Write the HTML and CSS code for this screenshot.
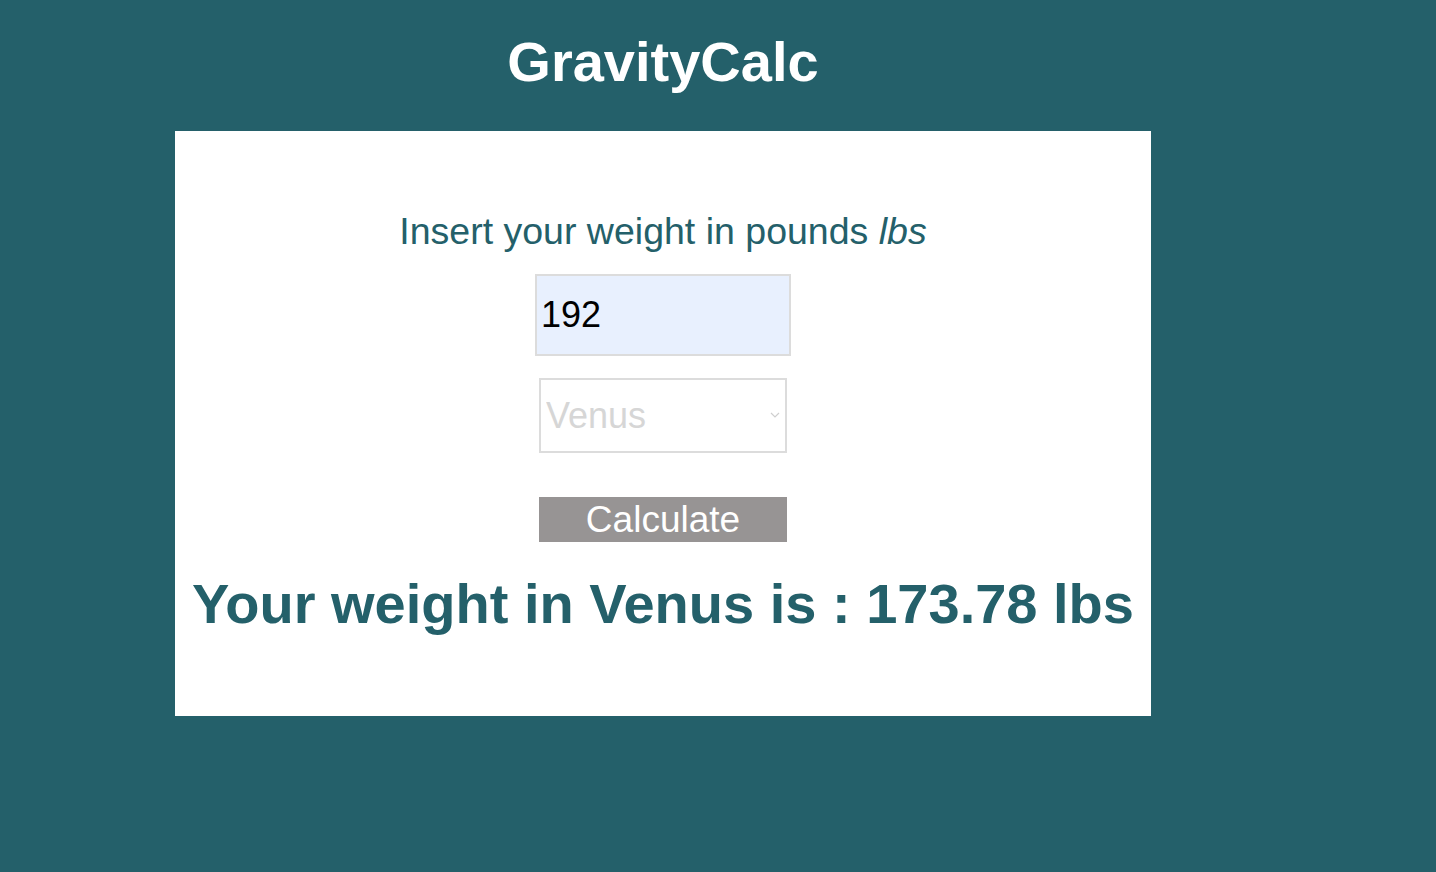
FILE: index.html
```html
<!DOCTYPE html>
<html lang="en">
<head>
<meta charset="utf-8">
<title>GravityCalc</title>
<link rel="stylesheet" href="styles.css">
</head>
<body>
<div class="wrap">
  <h1 class="title">GravityCalc</h1>
  <main class="card">
    <p class="prompt">Insert your weight in pounds <em>lbs</em></p>
    <input class="weight" type="text" value="192">
    <div class="select-box">
      <select class="planet">
        <option>Venus</option>
        <option>Mercury</option>
        <option>Mars</option>
        <option>Jupiter</option>
      </select>
      <svg class="chev" width="10" height="6" viewBox="0 0 10 6"><path d="M1 1 L5 5 L9 1" fill="none" stroke="#cfcfcf" stroke-width="1.2"/></svg>
    </div>
    <button class="calc" type="button">Calculate</button>
    <h2 class="result">Your weight in Venus is : 173.78 lbs</h2>
  </main>
</div>
</body>
</html>
```
FILE: styles.css
```css
html, body {
  margin: 0;
  padding: 0;
}
body {
  background: #24606a;
  font-family: "Liberation Sans", Arial, sans-serif;
  min-height: 872px;
}
.wrap {
  width: 976px;
  margin-left: 175px;
  display: flex;
  flex-direction: column;
}
.title {
  margin: 0;
  padding-top: 30px;
  height: 131px;
  box-sizing: border-box;
  font-size: 56px;
  line-height: 64px;
  font-weight: bold;
  color: #ffffff;
  text-align: center;
}
.card {
  background: #ffffff;
  height: 585px;
  box-sizing: border-box;
  padding-top: 79px;
  display: flex;
  flex-direction: column;
  align-items: center;
}
.prompt {
  margin: 0;
  font-size: 37.5px;
  line-height: 42px;
  color: #24606a;
}
.prompt em {
  font-style: italic;
}
.weight {
  margin-top: 22px;
  width: 256px;
  height: 82px;
  box-sizing: border-box;
  border: 2px solid #dcdcdc;
  background: #e8f0fe;
  font-family: "Liberation Sans", Arial, sans-serif;
  font-size: 36px;
  color: #000000;
  padding: 0 4px;
  outline: none;
}
.select-box {
  margin-top: 22px;
  position: relative;
  width: 248px;
  height: 75px;
}
.planet {
  appearance: none;
  -webkit-appearance: none;
  width: 248px;
  height: 75px;
  box-sizing: border-box;
  border: 2px solid #dcdcdc;
  border-radius: 0;
  background: #ffffff;
  font-family: "Liberation Sans", Arial, sans-serif;
  font-size: 36px;
  color: #d6d6d6;
  padding: 0 5px;
  outline: none;
}
.chev {
  position: absolute;
  right: 7px;
  top: 34px;
}
.calc {
  margin-top: 44px;
  width: 248px;
  height: 45px;
  border: none;
  background: #979494;
  color: #ffffff;
  font-family: "Liberation Sans", Arial, sans-serif;
  font-size: 37px;
  line-height: 45px;
  padding: 0;
}
.result {
  margin: 30px 0 0 0;
  font-size: 56px;
  line-height: 64px;
  font-weight: bold;
  color: #24606a;
  white-space: nowrap;
}
```
